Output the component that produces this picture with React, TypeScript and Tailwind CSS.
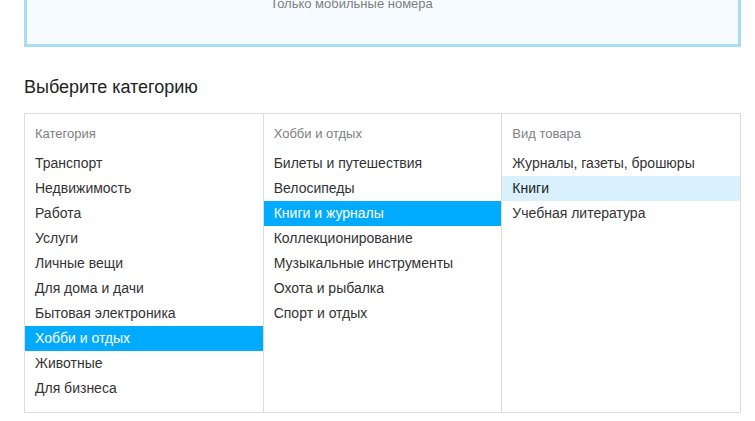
import { useState } from "react";

const columns = [
  {
    title: "Категория",
    items: [
      "Транспорт",
      "Недвижимость",
      "Работа",
      "Услуги",
      "Личные вещи",
      "Для дома и дачи",
      "Бытовая электроника",
      "Хобби и отдых",
      "Животные",
      "Для бизнеса",
    ],
    active: 7,
    tone: "strong",
  },
  {
    title: "Хобби и отдых",
    items: [
      "Билеты и путешествия",
      "Велосипеды",
      "Книги и журналы",
      "Коллекционирование",
      "Музыкальные инструменты",
      "Охота и рыбалка",
      "Спорт и отдых",
    ],
    active: 2,
    tone: "strong",
  },
  {
    title: "Вид товара",
    items: ["Журналы, газеты, брошюры", "Книги", "Учебная литература"],
    active: 1,
    tone: "soft",
  },
];

const CategoryColumn = ({
  title,
  items,
  active,
  tone,
  first,
}: {
  title: string;
  items: string[];
  active: number;
  tone: string;
  first: boolean;
}) => {
  const [selected, setSelected] = useState(active);

  return (
    <div className={`flex-1 pt-[10px] pb-[11px] ${first ? "" : "border-l border-[#dcdcdc]"}`}>
      {/* Column header */}
      <div className="px-[10px] h-[20px] leading-[20px] text-[13px] text-[#808080]">{title}</div>

      {/* Items */}
      <ul className="mt-[7px]">
        {items.map((item, i) => {
          const isActive = i === selected;
          const cls = isActive
            ? tone === "strong"
              ? "bg-[#00aaff] text-white"
              : "bg-[#d8f1fc] text-[#222]"
            : "text-[#333]";
          return (
            <li
              key={item}
              onClick={() => setSelected(i)}
              className={`h-[25px] leading-[25px] px-[10px] text-[14px] cursor-pointer ${cls}`}
            >
              {item}
            </li>
          );
        })}
      </ul>
    </div>
  );
};

export default function App() {
  return (
    <div
      className="min-h-[421px] bg-white overflow-hidden"
      style={{ fontFamily: '"Liberation Sans", Arial, sans-serif' }}
    >
      <div className="ml-[24px] w-[717px]">
        {/* Phone notice box */}
        <div className="-mt-[40px] h-[87px] border-[3px] border-[#aadcf5] bg-[#f5fbff] pt-[33px] pr-[62px] text-center text-[13px] leading-[16px] text-[#808080]">
          Только мобильные номера
        </div>

        {/* Heading */}
        <h2 className="mt-[28px] h-[24px] leading-[24px] text-[18px] text-[#222]">Выберите категорию</h2>

        {/* Category picker */}
        <div className="mt-[14px] flex border border-[#dcdcdc]">
          {columns.map((col, i) => (
            <CategoryColumn
              key={col.title}
              title={col.title}
              items={col.items}
              active={col.active}
              tone={col.tone}
              first={i === 0}
            />
          ))}
        </div>
      </div>
    </div>
  );
}
